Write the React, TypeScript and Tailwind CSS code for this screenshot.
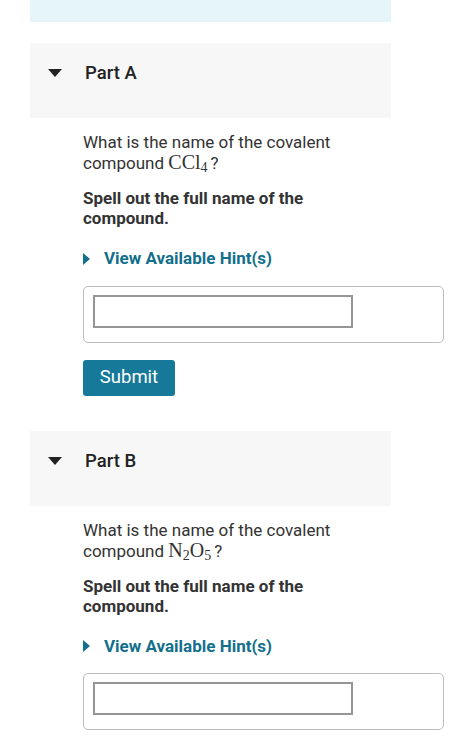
const partData = [
  { label: "Part A", formula: ["CCl", "4"] as [string, string], formula2: null as null | [string, string] },
  { label: "Part B", formula: ["N", "2"] as [string, string], formula2: ["O", "5"] as [string, string] },
];

const Caret = () => (
  <svg width="14" height="8" viewBox="0 0 14 8" className="shrink-0">
    <path d="M0 0 L14 0 L7 8 Z" fill="#222" />
  </svg>
);

const HintArrow = () => (
  <svg width="7" height="12" viewBox="0 0 7 12" className="shrink-0">
    <path d="M0 0 L7 6 L0 12 Z" fill="#146f8c" />
  </svg>
);

const Formula = ({ f, f2 }: { f: [string, string]; f2: null | [string, string] }) => (
  <span className="font-['Liberation_Serif',serif] text-[20px] leading-[16px] mr-[3px]">
    {f[0]}
    <span className="text-[14px] leading-[10px] align-[-3px]">{f[1]}</span>
    {f2 && (
      <>
        {f2[0]}
        <span className="text-[14px] leading-[10px] align-[-3px]">{f2[1]}</span>
      </>
    )}
  </span>
);

const Part = ({ label, formula, formula2, showSubmit }: {
  label: string;
  formula: [string, string];
  formula2: null | [string, string];
  showSubmit: boolean;
}) => (
  <div>
    <div className="w-[361px] h-[75px] bg-[#f7f7f7] flex items-start pt-[19px] pl-[18px] gap-[23px]">
      <span className="h-[22px] flex items-center">
        <Caret />
      </span>
      <span className="text-[18.5px] leading-[22px] font-medium text-[#222]">{label}</span>
    </div>
    <div className="ml-[53px] w-[361px] pt-[14px]">
      <p className="text-[17px] leading-[21px] text-[#333] w-[270px]">
        What is the name of the covalent compound <Formula f={formula} f2={formula2} />?
      </p>
      <p className="mt-[14px] text-[17px] leading-[20px] font-bold text-[#333] w-[240px]">
        Spell out the full name of the compound.
      </p>
      <div className="mt-[18px] flex items-center gap-[14px]">
        <HintArrow />
        <span className="text-[17px] font-bold text-[#146f8c]">View Available Hint(s)</span>
      </div>
      <div className="mt-[14px] h-[57px] border border-[#bdbdbd] rounded-[5px] px-[9px] pt-[8px]">
        <div className="w-[260px] h-[33px] border-2 border-[#959595] bg-white" />
      </div>
      {showSubmit && (
        <button className="mt-[17px] w-[92px] h-[36px] bg-[#16799a] rounded-[3px] text-white text-[18.5px]">
          Submit
        </button>
      )}
    </div>
  </div>
);

export default function App() {
  return (
    <div className="w-[474px] h-[740px] overflow-hidden bg-white font-['Roboto',sans-serif] pl-[30px]">
      <div className="w-[361px] h-[22px] bg-[#e6f6f8]" />
      <div className="mt-[21px]">
        <Part {...partData[0]} showSubmit />
      </div>
      <div className="mt-[35px]">
        <Part {...partData[1]} showSubmit={false} />
      </div>
    </div>
  );
}
